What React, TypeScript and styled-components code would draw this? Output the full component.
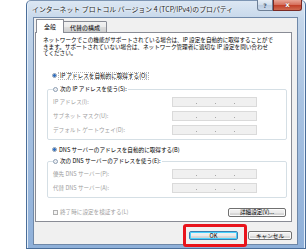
import React from 'react';
import styled, { createGlobalStyle } from 'styled-components';

const Global = createGlobalStyle`
  html, body { margin: 0; padding: 0; background: #ffffff; }
  body {
    width: 306px; height: 251px; overflow: hidden;
    font-family: "Noto Sans CJK JP", "Noto Sans", sans-serif;
    -webkit-font-smoothing: antialiased;
  }
`;

const Stage = styled.div`
  width: 306px;
  height: 251px;
  overflow: hidden;
  padding-left: 26px;
  box-sizing: border-box;
`;

const Window = styled.div`
  width: 280px;
  height: 249px;
  box-sizing: border-box;
  border: 1px solid #4a6e9a;
  border-top-color: #7d95b3;
  border-radius: 5px 5px 0 0;
  background: linear-gradient(180deg, #dce7f3 0%, #c4d6ea 8%, #a9c3e2 40%, #8fb0d9 100%);
  display: flex;
  flex-direction: column;
  box-shadow: inset 1px 0 0 #e4eef9, inset -1px 0 0 #e4eef9;
`;

const TitleBar = styled.div`
  height: 16px;
  display: flex;
  align-items: flex-start;
  padding-left: 5px;
  flex: none;
`;

const TitleText = styled.div`
  align-self: center;
  font-size: 6.9px;
  color: #1e1e1e;
  white-space: nowrap;
  flex: 1;
  text-shadow: 0 0 3px #ffffff, 0 0 2px #ffffff;
`;

const Controls = styled.div`
  display: flex;
  margin-right: 3px;
  margin-top: -1px;
`;

const CtlButton = styled.div<{ $close?: boolean }>`
  height: 11px;
  width: ${p => (p.$close ? '29px' : '16px')};
  box-sizing: border-box;
  border: 1px solid ${p => (p.$close ? '#7a2a24' : '#6d7f96')};
  border-top: none;
  border-radius: ${p => (p.$close ? '0 0 3px 0' : '0 0 0 3px')};
  background: ${p =>
    p.$close
      ? 'linear-gradient(180deg, #e8a596 0%, #d7725f 45%, #c2412a 55%, #cf6a50 100%)'
      : 'linear-gradient(180deg, #e8eff7 0%, #d1deec 45%, #bccde2 55%, #c9d8ea 100%)'};
  display: flex;
  align-items: center;
  justify-content: center;
  font-family: "DejaVu Sans", sans-serif;
  font-weight: bold;
  font-size: ${p => (p.$close ? '7px' : '6px')};
  color: ${p => (p.$close ? '#ffffff' : '#4d5f78')};
  text-shadow: ${p => (p.$close ? '0 0 1px #5a1a10' : 'none')};
`;

const Body = styled.div`
  flex: 1;
  display: flex;
  padding: 0 8px 3px 6px;
`;

const Client = styled.div`
  flex: 1;
  background: #f0f0f0;
  border: 1px solid #6f88a8;
  display: flex;
  flex-direction: column;
  padding: 1px 5px 0 1px;
`;

const TabRow = styled.div`
  display: flex;
  align-items: flex-end;
  height: 14px;
  padding-left: 1px;
  position: relative;
  z-index: 1;
  margin-bottom: -1px;
`;

const Tab = styled.div<{ $active?: boolean }>`
  font-size: 6px;
  color: #000;
  height: ${p => (p.$active ? '14px' : '12px')};
  box-sizing: border-box;
  padding: 0 ${p => (p.$active ? '7px' : '6px')};
  display: flex;
  align-items: center;
  border: 1px solid #898c95;
  border-bottom: ${p => (p.$active ? 'none' : '1px solid #898c95')};
  border-radius: 1px 1px 0 0;
  background: ${p => (p.$active ? '#ffffff' : 'linear-gradient(180deg, #f2f2f2 0%, #ebebeb 50%, #dddddd 51%, #cfcfcf 100%)')};
  margin-left: ${p => (p.$active ? '0' : '-1px')};
  white-space: nowrap;
  ${p => (p.$active ? 'position: relative; z-index: 2;' : '')}
`;

const Panel = styled.div`
  height: 190px;
  box-sizing: border-box;
  background: #ffffff;
  border: 1px solid #898c95;
  display: flex;
  flex-direction: column;
  padding: 4px 4px 0 7px;
  font-size: 5.6px;
  color: #000;
`;

const Desc = styled.div`
  line-height: 6.5px;
  white-space: nowrap;
`;

const Spacer = styled.div<{ $h: number }>`
  height: ${p => p.$h}px;
  flex: none;
`;

const RadioRow = styled.div`
  display: flex;
  align-items: center;
  gap: 1px;
  white-space: nowrap;
  margin-left: 9px;
  height: 8px;
  color: #000;
`;

const RadioDot = styled.span<{ $checked?: boolean }>`
  width: 5px;
  height: 5px;
  box-sizing: border-box;
  border-radius: 50%;
  border: 1px solid #8a9bb0;
  background: ${p => (p.$checked ? 'radial-gradient(circle, #2f6fc4 0 1.2px, #cfe0f2 1.6px, #f4f7fb 100%)' : 'radial-gradient(circle, #e6e9ee 0, #ffffff 100%)')};
  flex: none;
`;

const Label = styled.span<{ $focus?: boolean }>`
  display: inline-block;
  height: 8px;
  line-height: 8px;
  padding: 0 1px;
  box-sizing: border-box;
  ${p => (p.$focus ? 'border: 1px dotted #b4b4b4; line-height: 6px;' : '')}
`;

const Group = styled.fieldset`
  margin: 0 0 0 4px;
  width: 240px;
  box-sizing: border-box;
  border: 1px solid #d5dfe5;
  border-radius: 2px;
  padding: 4px 0 4px 5px;
  display: flex;
  flex-direction: column;
  gap: 4px;
`;

const Legend = styled.legend`
  padding: 0 1px 0 0;
  margin-left: 0px;
  display: flex;
  align-items: center;
  gap: 2px;
  white-space: nowrap;
  font-size: 5.6px;
  line-height: 7px;
  height: 7px;
`;

const FieldRow = styled.div`
  display: flex;
  align-items: center;
  height: 10px;
  color: #a0a0a0;
`;

const FieldLabel = styled.span`
  width: 119px;
  white-space: nowrap;
`;

const IpField = styled.div`
  width: 85px;
  height: 10px;
  box-sizing: border-box;
  border: 1px solid #dadada;
  background: #f0f0f0;
  display: flex;
  justify-content: space-around;
  align-items: flex-end;
  padding: 0 12px 2px 14px;
`;

const Dot = styled.span`
  width: 1px;
  height: 1px;
  background: #a8a8a8;
`;

const Check = styled.span`
  width: 5px;
  height: 5px;
  box-sizing: border-box;
  border: 1px solid #b0b0b0;
  background: #f4f4f4;
  flex: none;
`;

const BottomRow = styled.div`
  display: flex;
  align-items: center;
  justify-content: space-between;
  margin-top: 10px;
  padding-left: 10px;
  padding-right: 1px;
`;

const CheckRow = styled.div`
  display: flex;
  align-items: center;
  gap: 2px;
  color: #a0a0a0;
  white-space: nowrap;
`;

const PushButton = styled.div<{ $default?: boolean; $w: number }>`
  width: ${p => p.$w}px;
  height: 9px;
  box-sizing: border-box;
  border: 1px solid ${p => (p.$default ? '#3c7fb1' : '#707070')};
  border-radius: 2px;
  background: linear-gradient(180deg, #f2f2f2 0%, #ebebeb 50%, #dddddd 51%, #cfcfcf 100%);
  box-shadow: ${p => (p.$default ? 'inset 0 0 0 1px #48d2fe' : 'inset 0 0 0 1px #fbfbfb')};
  display: flex;
  align-items: center;
  justify-content: center;
  font-size: 5.6px;
  color: #000;
  white-space: nowrap;
`;

const ButtonBar = styled.div`
  display: flex;
  justify-content: flex-end;
  gap: 10px;
  margin-top: 9px;
`;

const Highlight = styled.div`
  position: relative;
  display: flex;
  &::after {
    content: '';
    position: absolute;
    left: -6px;
    right: -9px;
    top: -7px;
    bottom: -7px;
    border: 3px solid #e8141c;
    border-radius: 3px;
  }
`;

const IpRow: React.FC<{ label: string }> = ({ label }) => (
  <FieldRow>
    <FieldLabel>{label}</FieldLabel>
    <IpField>
      <Dot />
      <Dot />
      <Dot />
    </IpField>
  </FieldRow>
);

export default function App() {
  return (
    <>
      <Global />
      <Stage>
        <Window>
          <TitleBar>
            <TitleText>インターネット プロトコル バージョン 4 (TCP/IPv4)のプロパティ</TitleText>
            <Controls>
              <CtlButton>?</CtlButton>
              <CtlButton $close>x</CtlButton>
            </Controls>
          </TitleBar>
          <Body>
            <Client>
              <TabRow>
                <Tab $active>全般</Tab>
                <Tab>代替の構成</Tab>
              </TabRow>
              <Panel>
                <Desc>
                  ネットワークでこの機能がサポートされている場合は、IP 設定を自動的に取得することがで
                  <br />
                  きます。サポートされていない場合は、ネットワーク管理者に適切な IP 設定を問い合わせ
                  <br />
                  てください。
                </Desc>
                <Spacer $h={15} />
                <RadioRow>
                  <RadioDot $checked />
                  <Label $focus>IP アドレスを自動的に取得する(O)</Label>
                </RadioRow>
                <Spacer $h={6} />
                <Group>
                  <Legend>
                    <RadioDot />
                    <span>次の IP アドレスを使う(S):</span>
                  </Legend>
                  <IpRow label="IP アドレス(I):" />
                  <IpRow label="サブネット マスク(U):" />
                  <IpRow label="デフォルト ゲートウェイ(D):" />
                </Group>
                <Spacer $h={6} />
                <RadioRow>
                  <RadioDot $checked />
                  <Label>DNS サーバーのアドレスを自動的に取得する(B)</Label>
                </RadioRow>
                <Spacer $h={4} />
                <Group>
                  <Legend>
                    <RadioDot />
                    <span>次の DNS サーバーのアドレスを使う(E):</span>
                  </Legend>
                  <IpRow label="優先 DNS サーバー(P):" />
                  <IpRow label="代替 DNS サーバー(A):" />
                </Group>
                <BottomRow>
                  <CheckRow>
                    <Check />
                    <span>終了時に設定を検証する(L)</span>
                  </CheckRow>
                  <PushButton $w={58}>詳細設定(V)...</PushButton>
                </BottomRow>
              </Panel>
              <ButtonBar>
                <Highlight>
                  <PushButton $default $w={49}>OK</PushButton>
                </Highlight>
                <PushButton $w={44}>キャンセル</PushButton>
              </ButtonBar>
            </Client>
          </Body>
        </Window>
      </Stage>
    </>
  );
}
